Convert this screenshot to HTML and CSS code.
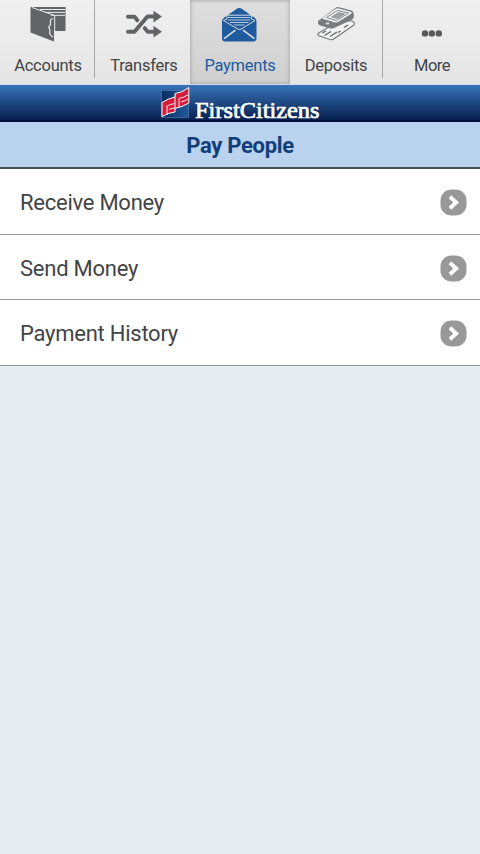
FILE: index.html
```html
<!DOCTYPE html>
<html lang="en">
<head>
<meta charset="utf-8">
<title>Pay People</title>
<link rel="stylesheet" href="styles.css">
</head>
<body>
<nav class="tabs">
  <a class="tab divided">
    <svg class="icon" viewBox="0 0 96 52">
      <path fill="#626366" d="M31 7H65.500V31H54V41.500L30.500 32.500V8Z"/>
      <path fill="none" stroke="#ededed" stroke-width="1" d="M32 7.500L54.700 15.500V41M40 9.500H65M45 12.400H65M51 15.300H65"/>
      <path fill="none" stroke="#ededed" stroke-width="1.200" d="M53 18.500Q50 19 50.500 22T49.500 26T50 30Q48.500 35 53 37"/>
    </svg>
    <span class="label accounts">Accounts</span>
  </a>
  <a class="tab">
    <svg class="icon" viewBox="0 0 96 52">
      <path fill="none" stroke="#626366" stroke-width="4" stroke-linejoin="round" stroke-linecap="round" d="M32 31.700H38.500L51.500 16.500H57"/>
      <path fill="none" stroke="#626366" stroke-width="4" stroke-linecap="round" stroke-linejoin="round" d="M32 16.800H38.500L41.300 20.200M48.800 28.200L51.700 31.700H57" />
      <path fill="#626366" d="M57.500 10.800L66 16.500L57.500 22.500ZM57.500 25.800L66 31.700L57.500 37.500Z"/>
    </svg>
    <span class="label transfers">Transfers</span>
  </a>
  <a class="tab selected">
    <svg class="icon" viewBox="0 0 96 52">
      <path fill="#205b9e" d="M32.300 17.500Q29.800 19 30 22V38Q30 41.500 33.500 41.500H61Q64.500 41.500 64.500 38V22Q64.700 19 62.200 17.500L50 9Q47.300 6.800 44.500 9Z"/>
      <path fill="none" stroke="#d0d9e2" stroke-width="1" d="M31.500 20.500L46 29.200Q47.500 30 49 29.200L63 20.500L59.500 19V15.200H35V19Z"/>
      <path fill="none" stroke="#b5c8de" stroke-width="1" d="M36 17.500H58.500M36 20H58.500M38 22.500H56.500M42 25H52.500"/>
      <path fill="none" stroke="#d9dde2" stroke-width="1.600" d="M32 38.700L43.500 30.200M51 30.200L62.500 38.700"/>
    </svg>
    <span class="label payments">Payments</span>
  </a>
  <a class="tab divided">
    <svg class="icon" viewBox="0 0 96 52">
      <path fill="#f1f1f1" stroke="#77787b" stroke-width="1.200" stroke-linejoin="round" d="M30 33.500L51 21H64Q67 22 66 25L46 38.700Q44 40.300 42 39.500L30 35.500Z"/>
      <path fill="none" stroke="#626366" stroke-width="1.300" d="M34.500 33L38 31M36.500 35.500L43 31.500M42 36.500L49 32M50 32.500L52.500 31M56 27.500L60 25"/>
      <path fill="#7a7b7e" d="M30 21L47.500 8Q49.500 6.500 52 7.500L63.500 10.500Q65.800 11.500 65.800 14V17Q65.500 18.500 63.500 20L46 28Q43.500 29 41 28L32 25.500Q29.500 24.500 30 21Z"/>
      <path fill="#ededed" d="M34.500 18L47.500 9Q49 8 51 8.500L62 11.500Q65 12.500 63 14L50 22Q47 23 44 21.500L35 19Q33.500 18.800 34.500 18Z"/>
      <path fill="#f7f7f7" stroke="#85868a" stroke-width="1" d="M38.500 17.500L49.500 10.500L60.500 13L48.500 20.500Z"/>
      <path fill="#a1a2a4" stroke="#85868a" stroke-width=".8" d="M43.500 17L50.500 12.500L56.500 14L49.500 18.500Z"/>
      <ellipse cx="39.500" cy="23.500" rx="2" ry="1.100" fill="#ddd"/>
    </svg>
    <span class="label deposits">Deposits</span>
  </a>
  <a class="tab">
    <svg class="icon" viewBox="0 0 96 52">
      <g fill="#58595b"><circle cx="41" cy="33.400" r="3.200"/><circle cx="47.900" cy="33.400" r="3.200"/><circle cx="54.800" cy="33.400" r="3.200"/></g>
    </svg>
    <span class="label more">More</span>
  </a>
</nav>
<header class="brand">
  <svg class="logo" viewBox="160 85 162 37">
    <defs><linearGradient id="tile" x2="1"><stop stop-color="#082c62"/><stop offset="1" stop-color="#215a9b"/></linearGradient></defs>
    <path fill="url(#tile)" stroke="#5580b2" stroke-width=".6" d="M161.500 90.500H188.500V117.500H161.500Z"/>
    <path fill="#d51d3b" stroke="#fff" stroke-width="1" stroke-linejoin="round" d="M162 102.500Q168 98.500 175 97V93.500Q182 93 188.800 87.500V103Q182 107 175 108.500V112Q169 112.500 162 116.500Z"/>
    <path fill="none" stroke="#fff" stroke-width=".9" d="M175 97V108.500M167 115V106Q171 104 175 103.500M169 109.500Q172 108 175 108M179 107V98.500Q184 97.500 188.500 94.500M181 102Q185 101 188.500 99"/>
    <text class="wordmark" x="195" y="118" textLength="124.500" lengthAdjust="spacingAndGlyphs">FirstCitizens</text>
  </svg>
</header>
<h1 class="title"><span>Pay People</span></h1>
<main class="menu">
  <a class="row"><span class="receive">Receive Money</span><svg class="chevron" viewBox="0 0 28 28"><rect x=".5" y=".5" width="27" height="27" rx="11.500" fill="#989898"/><path d="M10.300 8L16.800 14L10.300 20" fill="none" stroke="#fff" stroke-width="4"/></svg></a>
  <a class="row"><span class="send">Send Money</span><svg class="chevron" viewBox="0 0 28 28"><rect x=".5" y=".5" width="27" height="27" rx="11.500" fill="#989898"/><path d="M10.300 8L16.800 14L10.300 20" fill="none" stroke="#fff" stroke-width="4"/></svg></a>
  <a class="row"><span class="history">Payment History</span><svg class="chevron" viewBox="0 0 28 28"><rect x=".5" y=".5" width="27" height="27" rx="11.500" fill="#989898"/><path d="M10.300 8L16.800 14L10.300 20" fill="none" stroke="#fff" stroke-width="4"/></svg></a>
</main>
</body>
</html>
```
FILE: styles.css
```css
* { box-sizing: border-box; }
body {
  margin: 0;
  min-height: 854px;
  background: #e6ebef;
  font-family: Roboto, "Liberation Sans", sans-serif;
  color: #434446;
}
.tabs {
  display: grid;
  grid-template-columns: repeat(5, 96px);
  height: 85px;
  background: linear-gradient(#f0f0f0, #e5e5e5);
  border-bottom: 1px solid #d8dadd;
}
.tab {
  display: flex;
  flex-direction: column;
  align-items: center;
  height: 84px;
}
.divided {
  background: linear-gradient(#a5a5a5, #a5a5a5) 94px 0 / 1px 78px no-repeat;
}
.selected {
  margin: 0 -2px;
  background: linear-gradient(#dedede, #d0d0d0);
  box-shadow: inset 0 0 4px #999;
  color: #205b9e;
}
.icon { width: 96px; height: 52px; flex: none; }
.label {
  font-size: 16.500px;
  letter-spacing: -.25px;
  line-height: 27px;
  white-space: nowrap;
}
.more { letter-spacing: -.5px; }
.brand {
  display: flex;
  justify-content: center;
  height: 37px;
  padding-left: 2px;
  background: linear-gradient(#3872b8, #06204f 95%, #020f3c 96%);
}
.logo { width: 162px; height: 37px; overflow: visible; }
.wordmark {
  font-family: "Liberation Serif", serif;
  font-size: 23px;
  fill: #fff;
  stroke: #fff;
  stroke-width: .7px;
}
.title {
  margin: 0;
  height: 47px;
  border-bottom: 2px solid #46505c;
  background: #b9d2ee;
  color: #123e78;
  font-size: 22px;
  font-weight: 700;
  letter-spacing: -.3px;
  line-height: 47px;
  text-align: center;
}
.row {
  display: flex;
  align-items: center;
  justify-content: space-between;
  height: 65.500px;
  padding: 3px 13px 0 20px;
  background: #fff;
  border-bottom: 1.500px solid #999;
  font-size: 22px;
  letter-spacing: -.25px;
}
.chevron { width: 27px; height: 27px; }
```
